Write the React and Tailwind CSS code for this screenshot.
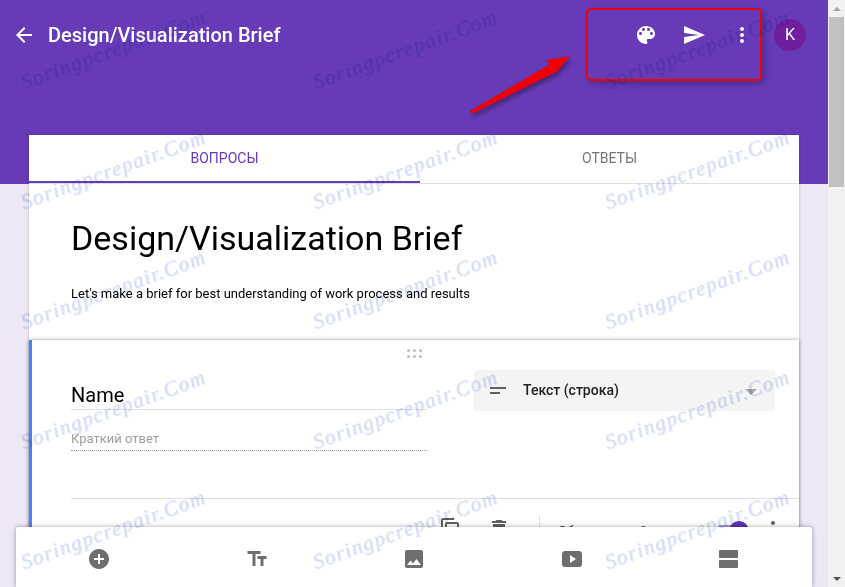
const paths = {
  back: 'M20 11H7.83l5.59-5.59L12 4l-8 8 8 8 1.41-1.41L7.83 13H20v-2z',
  palette: 'M12 3c-4.97 0-9 4.03-9 9s4.03 9 9 9c.83 0 1.5-.67 1.5-1.5 0-.39-.15-.74-.39-1.01-.23-.26-.38-.61-.38-.99 0-.83.67-1.5 1.5-1.5H16c2.76 0 5-2.24 5-5 0-4.42-4.03-8-9-8zm-5.5 9c-.83 0-1.5-.67-1.5-1.5S5.67 9 6.5 9 8 9.67 8 10.5 7.33 12 6.5 12zm3-4C8.67 8 8 7.33 8 6.5S8.67 5 9.5 5s1.5.67 1.5 1.5S10.33 8 9.5 8zm5 0c-.83 0-1.5-.67-1.5-1.5S13.67 5 14.5 5s1.5.67 1.5 1.5S15.33 8 14.5 8zm3 4c-.83 0-1.5-.67-1.5-1.5S16.67 9 17.5 9s1.5.67 1.5 1.5-.67 1.5-1.5 1.5z',
  send: 'M2.01 21L23 12 2.01 3 2 10l15 2-15 2z',
  more: 'M12 8c1.1 0 2-.9 2-2s-.9-2-2-2-2 .9-2 2 .9 2 2 2zm0 2c-1.1 0-2 .9-2 2s.9 2 2 2 2-.9 2-2-.9-2-2-2zm0 6c-1.1 0-2 .9-2 2s.9 2 2 2 2-.9 2-2-.9-2-2-2z',
  add: 'M12 2C6.48 2 2 6.48 2 12s4.48 10 10 10 10-4.48 10-10S17.52 2 12 2zm5 11h-4v4h-2v-4H7v-2h4V7h2v4h4v2z',
  text: 'M2.5 4v3h5v12h3V7h5V4h-13zm19 5h-9v3h3v7h3v-7h3V9z',
  photo: 'M21 19V5c0-1.1-.9-2-2-2H5c-1.1 0-2 .9-2 2v14c0 1.1.9 2 2 2h14c1.1 0 2-.9 2-2zM8.5 13.5l2.5 3.01L14.5 12l4.5 6H5l3.5-4.5z',
  video: 'M19 4H5C3.3 4 2 5.3 2 7v10c0 1.7 1.3 3 3 3h14c1.7 0 3-1.3 3-3V7c0-1.7-1.3-3-3-3zM10 16V8l6 4-6 4z',
  section: 'M20 13H3c-.55 0-1 .45-1 1v6c0 .55.45 1 1 1h17c.55 0 1-.45 1-1v-6c0-.55-.45-1-1-1zm0-10H3c-.55 0-1 .45-1 1v6c0 .55.45 1 1 1h17c.55 0 1-.45 1-1V4c0-.55-.45-1-1-1z',
  copy: 'M16 1H5a2 2 0 0 0-2 2v13h2V3h11V1zm3 4H9a2 2 0 0 0-2 2v14a2 2 0 0 0 2 2h10a2 2 0 0 0 2-2V7a2 2 0 0 0-2-2zm0 16H9V7h10v14z',
  trash: 'M6 19c0 1.1.9 2 2 2h8c1.1 0 2-.9 2-2V7H6v12zM19 4h-3.5l-1-1h-5l-1 1H5v2h14V4z',
};

function Icon({ d, className }) {
  return (
    <svg viewBox="0 0 24 24" className={className} fill="currentColor">
      <path d={d} />
    </svg>
  );
}

function Watermarks() {
  const items = Array.from({ length: 15 });
  return (
    <div className="pointer-events-none absolute left-[25px] top-[-27px] grid grid-cols-[292px_292px_292px] auto-rows-[120px] mix-blend-multiply">
      {items.map((_, i) => (
        <div key={i} className="flex items-end">
          <span className="origin-bottom-left -rotate-[20deg] whitespace-nowrap font-['Liberation_Serif',serif] text-[21px] italic leading-none tracking-[1.4px] text-[#d6dcf4] [text-shadow:1px_1px_0_#e8ebf9]">
            Soringpcrepair.Com
          </span>
        </div>
      ))}
    </div>
  );
}

function Annotation() {
  return (
    <>
      <div className="pointer-events-none absolute left-[586px] top-[8px] h-[73px] w-[176px] rounded-[5px] border-2 border-[#f00000] shadow-[3px_3px_6px_rgba(0,0,0,0.25)]" />
      <svg className="pointer-events-none absolute left-[465px] top-[50px] h-[70px] w-[110px]" viewBox="0 0 110 70">
        <polygon points="5,61 6.5,64 91,22 90,24 105,6 82,10 84,15" fill="#f00000" style={{ filter: 'drop-shadow(2px 3px 2px rgba(0,0,0,0.35))' }} />
      </svg>
    </>
  );
}

function Header() {
  return (
    <div className="h-[184px] bg-[#673ab7]">
      <div className="flex h-[70px] items-center pb-[1px] pl-[12px] text-white">
        <Icon d={paths.back} className="h-6 w-6" />
        <span className="ml-[12px] text-[20px] font-medium leading-none">Design/Visualization Brief</span>
        <div className="ml-auto flex items-center gap-[24px] pr-[22px]">
          <Icon d={paths.palette} className="h-6 w-6" />
          <Icon d={paths.send} className="h-6 w-6" />
          <Icon d={paths.more} className="h-6 w-6" />
          <div className="ml-[-4px] flex h-8 w-8 items-center justify-center rounded-full bg-[#6f1f9e] text-[16px]">K</div>
        </div>
      </div>
    </div>
  );
}

function Tabs() {
  return (
    <div className="flex h-[49px] border-b border-[#e0e0e0] text-[14px] font-normal">
      <div className="flex h-[48px] w-[391px] items-center justify-center border-b-2 border-[#673ab7] text-[#673ab7]">ВОПРОСЫ</div>
      <div className="flex h-[46px] w-[379px] items-center justify-center text-[#757575]">ОТВЕТЫ</div>
    </div>
  );
}

function QuestionCard() {
  return (
    <div className="h-[300px] border-l-[3px] border-[#4285f4] shadow-[0_0_4px_rgba(0,0,0,0.4)]">
      <div className="flex justify-center pt-[9px] pr-[3px]">
        <div className="grid grid-cols-3 gap-x-[3px] gap-y-[3px]">
          {Array.from({ length: 6 }).map((_, i) => (
            <span key={i} className="h-[3px] w-[3px] rounded-full bg-[#bdbdbd]" />
          ))}
        </div>
      </div>
      <div className="mt-[12px] flex pl-[39px]">
        <div className="w-[356px]">
          <div className="mt-[1px] h-[39px] border-b border-[#e0e0e0] pt-[12px] text-[20px] leading-[24px] text-black">Name</div>
          <div className="h-[41px] border-b border-dotted border-[#9e9e9e] pt-[21px] text-[13px] leading-[16px] text-[#9e9e9e]">Краткий ответ</div>
        </div>
        <div className="ml-[47px] flex h-[41px] w-[301px] items-center rounded-[3px] bg-[#f4f4f4] pl-[16px] pr-[18px]">
          <div className="flex w-[33px] flex-col gap-[3px]">
            <span className="h-[2px] w-[16px] bg-[#616161]" />
            <span className="h-[2px] w-[10px] bg-[#616161]" />
          </div>
          <span className="text-[14px] font-medium text-[#212121]">Текст (строка)</span>
          <span className="ml-auto mt-[2px] h-0 w-0 border-x-[6px] border-t-[6px] border-x-transparent border-t-[#ababab]" />
        </div>
      </div>
      <div className="ml-[39px] mt-[47px] flex h-[60px] border-t border-[#e0e0e0] text-[#616161]">
        <div className="ml-[367px] mt-[18px]">
          <Icon d={paths.copy} className="h-6 w-6" />
        </div>
        <div className="ml-[25px] mt-[18px]">
          <Icon d={paths.trash} className="h-6 w-6" />
        </div>
        <div className="ml-[28px] mt-[16px] h-[40px] w-px bg-[#e0e0e0]" />
        <div className="ml-[18px] mt-[22px] w-[157px] text-[13px] text-[#424242]">Обязательный</div>
        <div className="relative mt-[26px] h-[14px] w-[34px] rounded-full bg-[#b39ddb]">
          <span className="absolute right-0 top-[-4px] h-[20px] w-[20px] rounded-full bg-[#5e2fb5]" />
        </div>
        <div className="ml-[12px] mt-[18px]">
          <Icon d={paths.more} className="h-6 w-6" />
        </div>
      </div>
    </div>
  );
}

function BottomBar() {
  return (
    <div className="absolute bottom-0 left-[16px] flex h-[60px] w-[796px] items-center justify-between rounded-t-[3px] bg-white px-[71px] pt-[4px] text-[#6e6e6e] shadow-[0_0_5px_rgba(0,0,0,0.35)]">
      <Icon d={paths.add} className="h-6 w-6" />
      <Icon d={paths.text} className="h-6 w-6" />
      <Icon d={paths.photo} className="h-6 w-6" />
      <Icon d={paths.video} className="h-6 w-6" />
      <Icon d={paths.section} className="h-6 w-6" />
    </div>
  );
}

function Scrollbar() {
  return (
    <div className="flex h-full w-[17px] flex-col bg-[#f1f1f1]">
      <div className="flex h-[17px] items-center justify-center">
        <span className="h-0 w-0 border-x-[4px] border-b-[4px] border-x-transparent border-b-[#a3a3a3]" />
      </div>
      <div className="mx-[1px] h-[170px] bg-[#c1c1c1]" />
      <div className="mt-auto flex h-[17px] items-center justify-center">
        <span className="h-0 w-0 border-x-[4px] border-t-[4px] border-x-transparent border-t-[#505050]" />
      </div>
    </div>
  );
}

export default function App() {
  return (
    <div className="relative flex h-[587px] w-[845px] overflow-hidden font-[Roboto,sans-serif]">
      <div className="relative h-full flex-1 overflow-hidden bg-[#ede7f6]">
        <Header />
        <div className="mx-[29px] mt-[-49px] h-[500px] bg-white shadow-[0_0_3px_rgba(0,0,0,0.2)]">
          <Tabs />
          <div className="h-[156px] pl-[42px] pt-[34px]">
            <h1 className="text-[34px] leading-[40px] text-black">Design/Visualization Brief</h1>
            <p className="mt-[27px] text-[13px] leading-[18px] text-black">Let's make a brief for best understanding of work process and results</p>
          </div>
          <QuestionCard />
        </div>
        <BottomBar />
      </div>
      <Scrollbar />
      <Annotation />
      <Watermarks />
    </div>
  );
}
